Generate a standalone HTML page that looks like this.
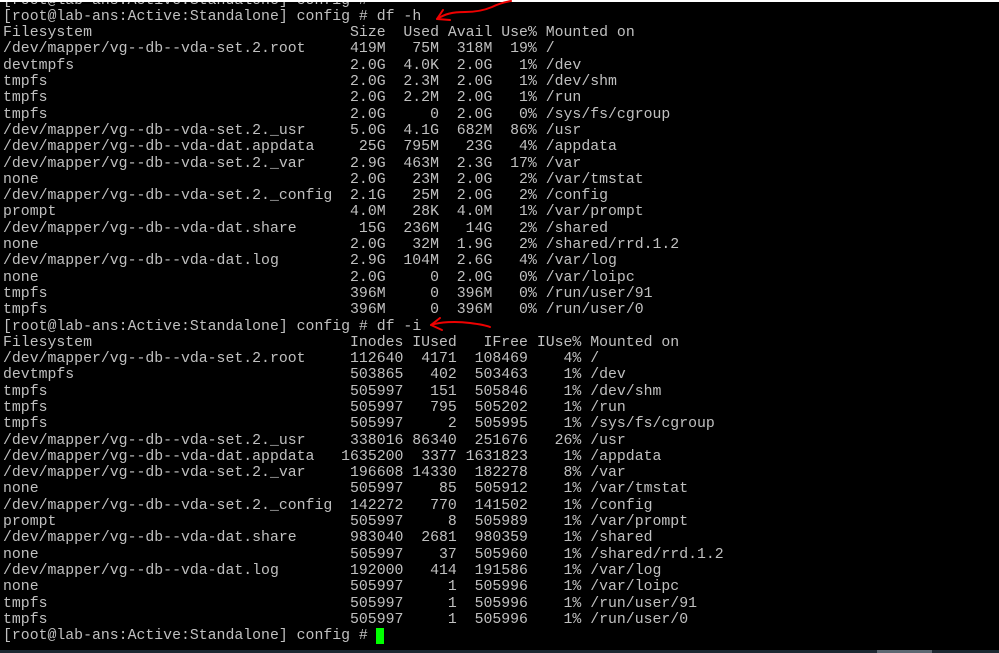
<!DOCTYPE html>
<html><head><meta charset="utf-8"><style>
html,body{margin:0;padding:0;background:#000;width:999px;height:653px;overflow:hidden;position:relative}
#t{position:absolute;left:3px;top:-7.45px;font-family:"Liberation Mono",monospace;font-size:14.83px;line-height:16.3px;color:#c0c0c0;white-space:pre}
#t div{height:16.3px}
span{display:inline-block;text-align:right;white-space:pre}
.a span:nth-child(1){width:39ch;text-align:left}
.a span:nth-child(2){width:4ch}
.a span:nth-child(3){width:6ch}
.a span:nth-child(4){width:6ch}
.a span:nth-child(5){width:5ch}
.a span:nth-child(6){text-align:left;padding-left:1ch}
.b span:nth-child(1){width:38ch;text-align:left}
.b span:nth-child(2){width:7ch}
.b span:nth-child(3){width:6ch}
.b span:nth-child(4){width:8ch}
.b span:nth-child(5){width:6ch}
.b span:nth-child(6){text-align:left;padding-left:1ch}
#top{position:absolute;left:0;top:0;width:999px;height:2px;background:#fff}
#bot{position:absolute;left:0;top:650px;width:999px;height:3px;background:#1d2831}
#bot2{position:absolute;left:877px;top:650px;width:55px;height:3px;background:#5d6872}
#cur{position:absolute;left:376px;top:628px;width:8px;height:16px;background:#00ff00}
svg{position:absolute;left:0;top:0}
</style></head><body>
<div id="t"><div>[root@lab-ans:Active:Standalone] config #</div><div>[root@lab-ans:Active:Standalone] config # df -h</div><div class="a"><span>Filesystem</span><span>Size</span><span>Used</span><span>Avail</span><span>Use%</span><span>Mounted on</span></div><div class="a"><span>/dev/mapper/vg--db--vda-set.2.root</span><span>419M</span><span>75M</span><span>318M</span><span>19%</span><span>/</span></div><div class="a"><span>devtmpfs</span><span>2.0G</span><span>4.0K</span><span>2.0G</span><span>1%</span><span>/dev</span></div><div class="a"><span>tmpfs</span><span>2.0G</span><span>2.3M</span><span>2.0G</span><span>1%</span><span>/dev/shm</span></div><div class="a"><span>tmpfs</span><span>2.0G</span><span>2.2M</span><span>2.0G</span><span>1%</span><span>/run</span></div><div class="a"><span>tmpfs</span><span>2.0G</span><span>0</span><span>2.0G</span><span>0%</span><span>/sys/fs/cgroup</span></div><div class="a"><span>/dev/mapper/vg--db--vda-set.2._usr</span><span>5.0G</span><span>4.1G</span><span>682M</span><span>86%</span><span>/usr</span></div><div class="a"><span>/dev/mapper/vg--db--vda-dat.appdata</span><span>25G</span><span>795M</span><span>23G</span><span>4%</span><span>/appdata</span></div><div class="a"><span>/dev/mapper/vg--db--vda-set.2._var</span><span>2.9G</span><span>463M</span><span>2.3G</span><span>17%</span><span>/var</span></div><div class="a"><span>none</span><span>2.0G</span><span>23M</span><span>2.0G</span><span>2%</span><span>/var/tmstat</span></div><div class="a"><span>/dev/mapper/vg--db--vda-set.2._config</span><span>2.1G</span><span>25M</span><span>2.0G</span><span>2%</span><span>/config</span></div><div class="a"><span>prompt</span><span>4.0M</span><span>28K</span><span>4.0M</span><span>1%</span><span>/var/prompt</span></div><div class="a"><span>/dev/mapper/vg--db--vda-dat.share</span><span>15G</span><span>236M</span><span>14G</span><span>2%</span><span>/shared</span></div><div class="a"><span>none</span><span>2.0G</span><span>32M</span><span>1.9G</span><span>2%</span><span>/shared/rrd.1.2</span></div><div class="a"><span>/dev/mapper/vg--db--vda-dat.log</span><span>2.9G</span><span>104M</span><span>2.6G</span><span>4%</span><span>/var/log</span></div><div class="a"><span>none</span><span>2.0G</span><span>0</span><span>2.0G</span><span>0%</span><span>/var/loipc</span></div><div class="a"><span>tmpfs</span><span>396M</span><span>0</span><span>396M</span><span>0%</span><span>/run/user/91</span></div><div class="a"><span>tmpfs</span><span>396M</span><span>0</span><span>396M</span><span>0%</span><span>/run/user/0</span></div><div>[root@lab-ans:Active:Standalone] config # df -i</div><div class="b"><span>Filesystem</span><span>Inodes</span><span>IUsed</span><span>IFree</span><span>IUse%</span><span>Mounted on</span></div><div class="b"><span>/dev/mapper/vg--db--vda-set.2.root</span><span>112640</span><span>4171</span><span>108469</span><span>4%</span><span>/</span></div><div class="b"><span>devtmpfs</span><span>503865</span><span>402</span><span>503463</span><span>1%</span><span>/dev</span></div><div class="b"><span>tmpfs</span><span>505997</span><span>151</span><span>505846</span><span>1%</span><span>/dev/shm</span></div><div class="b"><span>tmpfs</span><span>505997</span><span>795</span><span>505202</span><span>1%</span><span>/run</span></div><div class="b"><span>tmpfs</span><span>505997</span><span>2</span><span>505995</span><span>1%</span><span>/sys/fs/cgroup</span></div><div class="b"><span>/dev/mapper/vg--db--vda-set.2._usr</span><span>338016</span><span>86340</span><span>251676</span><span>26%</span><span>/usr</span></div><div class="b"><span>/dev/mapper/vg--db--vda-dat.appdata</span><span>1635200</span><span>3377</span><span>1631823</span><span>1%</span><span>/appdata</span></div><div class="b"><span>/dev/mapper/vg--db--vda-set.2._var</span><span>196608</span><span>14330</span><span>182278</span><span>8%</span><span>/var</span></div><div class="b"><span>none</span><span>505997</span><span>85</span><span>505912</span><span>1%</span><span>/var/tmstat</span></div><div class="b"><span>/dev/mapper/vg--db--vda-set.2._config</span><span>142272</span><span>770</span><span>141502</span><span>1%</span><span>/config</span></div><div class="b"><span>prompt</span><span>505997</span><span>8</span><span>505989</span><span>1%</span><span>/var/prompt</span></div><div class="b"><span>/dev/mapper/vg--db--vda-dat.share</span><span>983040</span><span>2681</span><span>980359</span><span>1%</span><span>/shared</span></div><div class="b"><span>none</span><span>505997</span><span>37</span><span>505960</span><span>1%</span><span>/shared/rrd.1.2</span></div><div class="b"><span>/dev/mapper/vg--db--vda-dat.log</span><span>192000</span><span>414</span><span>191586</span><span>1%</span><span>/var/log</span></div><div class="b"><span>none</span><span>505997</span><span>1</span><span>505996</span><span>1%</span><span>/var/loipc</span></div><div class="b"><span>tmpfs</span><span>505997</span><span>1</span><span>505996</span><span>1%</span><span>/run/user/91</span></div><div class="b"><span>tmpfs</span><span>505997</span><span>1</span><span>505996</span><span>1%</span><span>/run/user/0</span></div><div>[root@lab-ans:Active:Standalone] config # </div></div>
<div id="top"></div>
<div id="cur"></div>
<div id="bot"></div><div id="bot2"></div>
<svg width="999" height="653" viewBox="0 0 999 653">
<g fill="none" stroke="#ee0000" stroke-width="2" stroke-linecap="round" stroke-linejoin="round">
<path d="M437 19 C445 14 452 12 465 12 C475 12 485 10 492 7 C498 4 505 2 511 1"/>
<path d="M437 19 L443 10 M437 19 L450 20"/>
<path d="M431 325 C440 322 455 321 470 323 C478 324 485 325 490 327"/>
<path d="M431 325 L440 318 M431 325 L442 330"/>
</g></svg>
</body></html>
